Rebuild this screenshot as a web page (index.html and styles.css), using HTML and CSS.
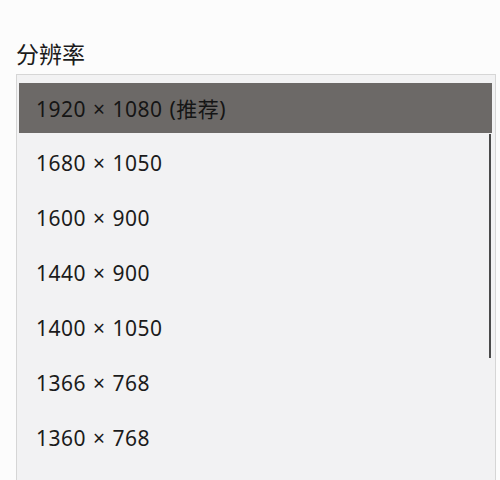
FILE: index.html
```html
<!DOCTYPE html>
<html lang="zh">
<head>
<meta charset="utf-8">
<link rel="stylesheet" href="styles.css">
</head>
<body>
<div class="page">
  <div class="label">分辨率</div>
  <div class="listbox">
    <div class="row selected">1920 × 1080 (推荐)</div>
    <div class="row">1680 × 1050</div>
    <div class="row">1600 × 900</div>
    <div class="row">1440 × 900</div>
    <div class="row">1400 × 1050</div>
    <div class="row">1366 × 768</div>
    <div class="row">1360 × 768</div>
    <div class="scrollbar"></div>
  </div>
</div>
</body>
</html>
```
FILE: styles.css
```css
html, body {
  margin: 0;
  padding: 0;
  background: #fcfcfc;
  height: 480px;
  overflow: hidden;
}
.page {
  padding: 38px 4px 0 16px;
  font-family: "Noto Sans", "Noto Sans CJK SC", sans-serif;
  color: #1b1b1b;
}
.label {
  font-family: "Noto Sans CJK SC", sans-serif;
  font-size: 23px;
  line-height: 30px;
  height: 36px;
}
.listbox {
  position: relative;
  border: 1px solid #d6d6d6;
  border-bottom: none;
  background: #f2f2f3;
  padding: 8px 3px 0 2px;
  display: flex;
  flex-direction: column;
  gap: 5px;
  height: 420px;
}
.row {
  height: 50px;
  display: flex;
  align-items: center;
  padding-left: 17px;
  font-size: 21px;
  letter-spacing: 0.5px;
  word-spacing: 1px;
  flex-shrink: 0;
}
.row.selected {
  background: #6c6967;
  color: #151515;
}
.scrollbar {
  position: absolute;
  left: 472px;
  top: 59px;
  width: 2px;
  height: 224px;
  background: #4a4a4a;
}
```
